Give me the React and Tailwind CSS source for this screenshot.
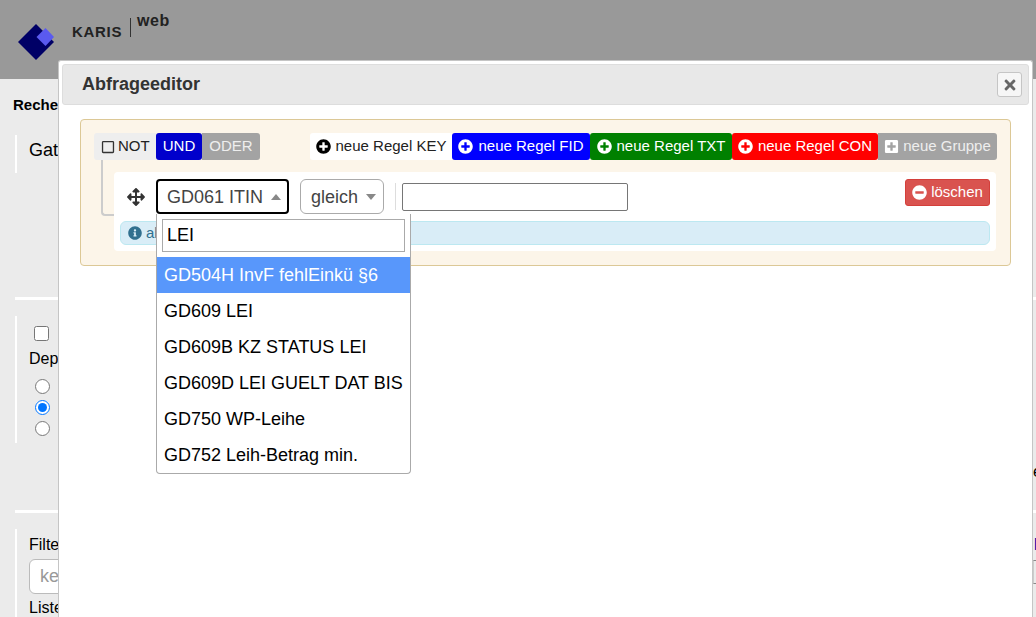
import { FaArrowsAlt, FaInfoCircle, FaMinusCircle, FaPlusCircle, FaPlusSquare, FaRegSquare, FaTimes } from "react-icons/fa";

const ruleButtons = [
  { label: "neue Regel KEY", width: "w-[142px]", color: "bg-white text-[#222]", iconColor: "text-black", radius: "rounded-l-[3px]" },
  { label: "neue Regel FID", width: "w-[138px]", color: "bg-[#0000ff] text-white", iconColor: "text-white", radius: "rounded-[3px]" },
  { label: "neue Regel TXT", width: "w-[142px]", color: "bg-[#008000] text-white", iconColor: "text-white", radius: "rounded-[3px]" },
  { label: "neue Regel CON", width: "w-[146px]", color: "bg-[#ff0000] text-white", iconColor: "text-white", radius: "rounded-[3px]" },
];

const options = [
  "GD504H InvF fehlEinkü §6",
  "GD609 LEI",
  "GD609B KZ STATUS LEI",
  "GD609D LEI GUELT DAT BIS",
  "GD750 WP-Leihe",
  "GD752 Leih-Betrag min.",
];

function Radio({ checked }) {
  return <input type="radio" readOnly checked={checked} className="block w-[15px] h-[15px] m-0 accent-[#0075ff]" />;
}

function Background() {
  return (
    <div className="pl-[13px] text-[16px] text-black">
      <div className="h-[56px] pt-[15px] text-[15px] font-bold">Recherche</div>
      <div className="ml-[2px] h-[38px] border-l-2 border-white pl-3 pt-[3px] text-[18px] leading-[24px]">Gattung</div>
      <div className="h-[3px] mt-[124px] bg-white ml-[2px]" />
      <div className="ml-[2px] mt-[16px] h-[127px] border-l-2 border-white pl-3 pt-[10px]">
        <input type="checkbox" readOnly className="block w-[15px] h-[15px] m-0 ml-[5px]" />
        <div className="mt-[7px] leading-[22px]">Depot</div>
        <div className="mt-[9px] ml-[6px] flex flex-col gap-[6px]">
          <Radio />
          <Radio checked />
          <Radio />
        </div>
      </div>
      <div className="flex justify-end h-[22px] mt-[18px] leading-[22px]">
        <span className="w-[3px] overflow-hidden">e</span>
      </div>
      <div className="h-[3px] mt-[27px] bg-white ml-[2px]" />
      <div className="flex ml-[2px] mt-[16px] h-[88px] border-l-2 border-white pl-3 pt-[5px]">
        <div>
          <div className="leading-[22px]">Filter</div>
          <div className="w-[200px] h-[35px] mt-[3px] rounded-[6px] border border-[#bbb] bg-white pl-[10px] text-[18px] leading-[33px] text-[#999]">keyword</div>
          <div className="leading-[22px] mt-[3px]">Liste</div>
        </div>
        <div className="ml-auto w-[3px] overflow-hidden">
          <div className="leading-[22px] pl-px font-bold text-[#0000aa]">I</div>
          <div className="h-[24px] mt-[4px] border-y border-l border-y-[#888] border-l-[#ccc]" />
        </div>
      </div>
    </div>
  );
}

function RuleRow() {
  return (
    <div className="relative ml-[20px] mt-[12px] w-[882px] h-[79px] rounded-[4px] bg-white pl-[6px] pt-px">
      <div className="absolute left-[-13px] top-[-12px] w-[13px] h-[56px] rounded-bl-[4px] border-l-2 border-b-2 border-[#ccc]" />
      <div className="flex items-start pt-[6px]">
        <FaArrowsAlt className="ml-[7px] mt-[9px] w-[18px] h-[18px] text-[#333]" />
        <div className="ml-[11px] w-[133px] h-[35px] rounded-[4px] border-2 border-black flex items-center pl-[9px] pt-px text-[18px] text-[#444]">
          GD061 ITIN
          <span className="ml-[8px] w-0 h-0 border-x-[5px] border-x-transparent border-b-[6px] border-b-[#888]" />
        </div>
        <div className="ml-[11px] w-[84px] h-[35px] rounded-[6px] border border-[#aaa] flex items-center pl-[10px] pt-px text-[18px] text-[#444]">
          gleich
          <span className="ml-[8px] w-0 h-0 border-x-[5px] border-x-transparent border-t-[6px] border-t-[#888]" />
        </div>
        <div className="ml-[11px] mt-[4px] w-px h-[27px] bg-[#ddd]" />
        <div className="ml-[6px] mt-[4px] w-[226px] h-[28px] rounded-[2px] border border-[#767676] bg-white" />
        <button className="ml-auto mr-[6px] w-[85px] h-[27px] rounded-[3px] border border-[#d43f3a] bg-[#d9534f] text-white text-[15px] flex items-center justify-center gap-[4px]">
          <FaMinusCircle className="w-[15px] h-[15px]" />
          löschen
        </button>
      </div>
      <div className="mt-[7px] mr-[6px] h-[24px] rounded-[6px] border border-[#bce8f1] bg-[#d9edf7] flex items-center pl-[7px] text-[15px] text-[#31708f]">
        <FaInfoCircle className="w-[14px] h-[14px] mr-[4px]" />
        al
      </div>
      <div className="absolute left-[42px] top-[42px] w-[255px] h-[260px] rounded-b-[4px] border border-t-0 border-[#aaa] bg-white text-[18px] text-black">
        <div className="mx-[5px] mt-[5px] h-[33px] border border-[#aaa] pl-[4px] leading-[31px]">LEI</div>
        <ul className="mt-[5px]">
          {options.map((o, i) => (
            <li key={o} className={`h-[36px] pl-[7px] leading-[36px] whitespace-nowrap ${i === 0 ? "bg-[#5897fb] text-white" : ""}`}>
              {o}
            </li>
          ))}
        </ul>
      </div>
    </div>
  );
}

function Modal() {
  return (
    <div className="absolute left-[58px] top-[60px] bottom-0 w-[975px] rounded-t-[3px] border border-b-0 border-[#c5c5c5] bg-white p-[3px]">
      <div className="h-[41px] rounded-[3px] border border-[#ddd] bg-[#e8e8e8] flex items-center justify-between pl-[19px] pr-[6px] text-[#333]">
        <span className="text-[18px] font-bold">Abfrageeditor</span>
        <button className="w-[25px] h-[25px] rounded-[3px] border border-[#c5c5c5] bg-[#f6f6f6] flex items-center justify-center">
          <FaTimes className="w-[16px] h-[16px] text-[#666]" />
        </button>
      </div>
      <div className="ml-[18px] mt-[14px] w-[931px] h-[147px] rounded-[4px] border border-[#dcc896] bg-[#fcf5e9] pl-[13px] pt-[13px]">
        <div className="flex justify-between pr-[13px] text-[15px]">
          <div className="flex h-[27px]">
            <div className="w-[62px] rounded-l-[3px] bg-[#eee] flex items-center pl-[7px] text-[#222]">
              <FaRegSquare className="w-[14px] h-[14px] mr-[3px] text-[#333]" />
              NOT
            </div>
            <div className="w-[46px] rounded-[3px] bg-[#0000cc] text-white flex items-center justify-center">UND</div>
            <div className="w-[58px] rounded-r-[3px] bg-[#a3a3a3] text-[#eee] flex items-center justify-center">ODER</div>
          </div>
          <div className="flex h-[27px]">
            {ruleButtons.map((b) => (
              <button key={b.label} className={`${b.width} ${b.color} ${b.radius} flex items-center justify-center gap-[5px]`}>
                <FaPlusCircle className={`w-[15px] h-[15px] ${b.iconColor}`} />
                {b.label}
              </button>
            ))}
            <button className="w-[119px] rounded-r-[3px] bg-[#a3a3a3] text-[#eee] flex items-center justify-center gap-[4px]">
              <FaPlusSquare className="w-[15px] h-[15px] text-white" />
              neue Gruppe
            </button>
          </div>
        </div>
        <RuleRow />
      </div>
    </div>
  );
}

export default function App() {
  return (
    <div className="relative w-[1036px] h-[617px] overflow-hidden bg-[#ebebeb] font-['Liberation_Sans',Arial,sans-serif]">
      <header className="h-[79px] bg-[#999] flex items-start pl-[18px] pt-[24px]">
        <svg width="36" height="36" viewBox="0 0 36 36">
          <path d="M18 0 L36 18 L18 36 L0 18 Z" fill="#000066" />
          <path d="M27.5 4 L36 13 L27.5 22 L18.5 13 Z" fill="#5a5af0" />
        </svg>
        <span className="ml-[18px] w-[50px] text-[15px] leading-[15px] font-bold tracking-[0.7px] text-[#222]">KARIS</span>
        <span className="ml-[8px] mt-[-6px] w-px h-[19px] bg-[#333]" />
        <span className="ml-[6px] mt-[-11px] text-[16px] leading-[16px] font-bold tracking-[0.6px] text-[#222]">web</span>
      </header>
      <Background />
      <Modal />
    </div>
  );
}
